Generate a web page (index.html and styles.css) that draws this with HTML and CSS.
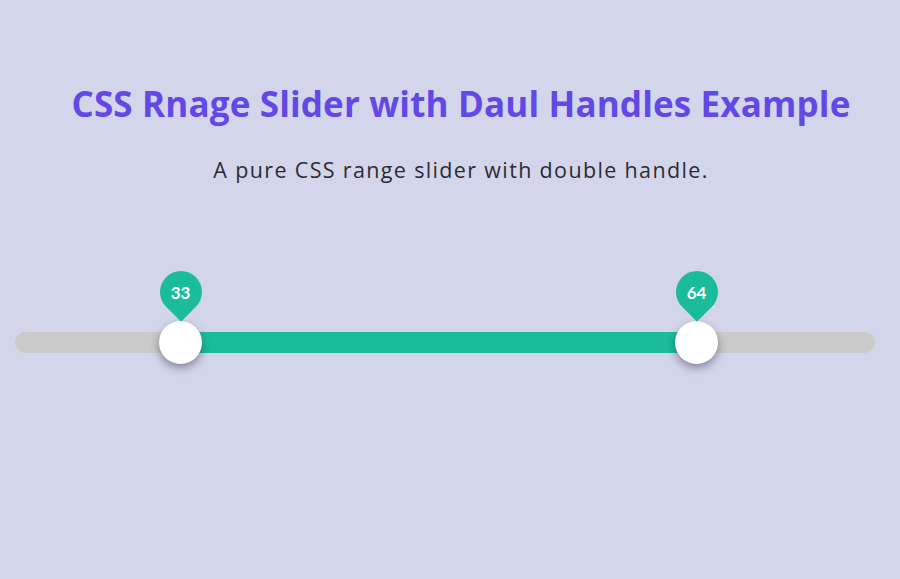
FILE: index.html
```html
<!DOCTYPE html>
<html lang="en">
<head>
<meta charset="utf-8">
<title>CSS Range Slider</title>
<link rel="stylesheet" href="styles.css">
</head>
<body>
  <header class="intro">
    <h1 class="title">CSS Rnage Slider with Daul Handles Example</h1>
    <p class="lead">A pure CSS range slider with double handle.</p>
  </header>

  <section class="slider">
    <div class="track">
      <div class="fill" style="left: 19.3%; right: 20.7%;"></div>
      <div class="handle" style="left: 19.3%;">
        <span class="tip"><span class="tip-value">33</span></span>
      </div>
      <div class="handle" style="left: 79.3%;">
        <span class="tip"><span class="tip-value">64</span></span>
      </div>
    </div>
  </section>
</body>
</html>
```

FILE: styles.css
```css
html, body {
  margin: 0;
  padding: 0;
}

body {
  background: #d3d6eb;
  width: 900px;
  height: 579px;
  overflow: hidden;
  font-family: "Open Sans", Lato, sans-serif;
}

.intro {
  padding: 82px 0 0 22px;
  text-align: center;
}

.title {
  margin: 0;
  font-family: "Open Sans", sans-serif;
  font-weight: 700;
  font-size: 35px;
  line-height: 44px;
  letter-spacing: 0.15px;
  color: #6348e8;
}

.lead {
  margin: 30px 0 0;
  font-family: "Open Sans", sans-serif;
  font-weight: 400;
  font-size: 21.5px;
  line-height: 28px;
  letter-spacing: 1.35px;
  color: #2c2c33;
}

.slider {
  margin: 148px 25px 0 15px;
}

.track {
  position: relative;
  height: 21px;
  border-radius: 11px;
  background: #cacaca;
}

.fill {
  position: absolute;
  top: 0;
  bottom: 0;
  background: #1abc9c;
}

.handle {
  position: absolute;
  top: 50%;
  width: 43px;
  height: 43px;
  margin: -21.5px 0 0 -21.5px;
  border-radius: 50%;
  background: #fff;
  box-shadow: 0 4px 9px rgba(40, 40, 60, 0.45);
}

.tip {
  position: absolute;
  left: 50%;
  bottom: 100%;
  width: 42px;
  height: 42px;
  margin: 0 0 4px -21px;
  border-radius: 50% 50% 0 50%;
  background: #1abc9c;
  transform: translateY(-4px) rotate(45deg);
  transform-origin: 50% 50%;
  display: flex;
  align-items: center;
  justify-content: center;
}

.tip-value {
  transform: rotate(-45deg);
  color: #fff;
  font-family: Lato, sans-serif;
  font-weight: 700;
  font-size: 17px;
  line-height: 1;
}
```
